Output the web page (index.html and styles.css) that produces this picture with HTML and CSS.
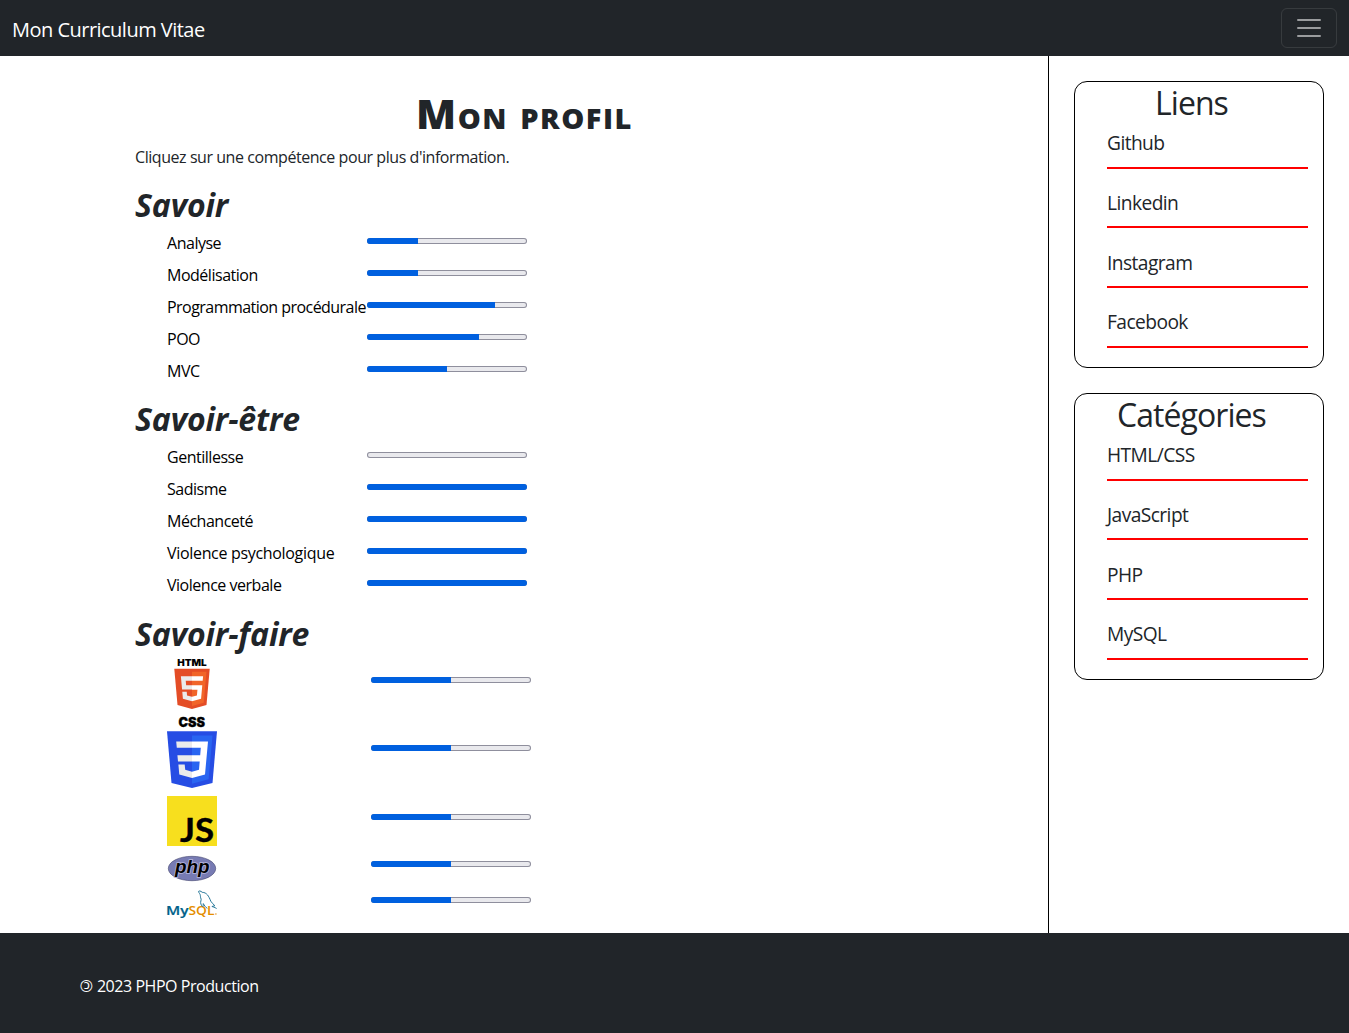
FILE: index.html
```html
<!DOCTYPE html>
<html lang="fr">
<head>
<meta charset="utf-8">
<title>Mon Curriculum Vitae</title>
<link rel="stylesheet" href="styles.css">
</head>
<body>
<nav class="navbar">
  <a class="brand">Mon Curriculum Vitae</a>
  <button class="toggler" aria-label="Menu"><svg width="30" height="30" viewBox="0 0 30 30"><path d="M4 7h22M4 15h22M4 23h22" stroke="#fff" stroke-opacity=".55" stroke-width="2" stroke-linecap="round" stroke-miterlimit="10"/></svg></button>
</nav>
<div class="page">
  <main class="profile">
    <h1>Mon profil</h1>
    <p class="intro">Cliquez sur une compétence pour plus d'information.</p>
    <h2>Savoir</h2>
    <ul class="skills">
      <li><span>Analyse</span><div class="bar"><i style="width:32%"></i></div></li>
      <li><span>Modélisation</span><div class="bar"><i style="width:32%"></i></div></li>
      <li><span class="tight">Programmation procédurale</span><div class="bar"><i style="width:80%"></i></div></li>
      <li><span>POO</span><div class="bar"><i style="width:70%"></i></div></li>
      <li><span>MVC</span><div class="bar"><i style="width:50%"></i></div></li>
    </ul>
    <h2>Savoir-être</h2>
    <ul class="skills">
      <li><span>Gentillesse</span><div class="bar"></div></li>
      <li><span>Sadisme</span><div class="bar"><i style="width:100%"></i></div></li>
      <li><span>Méchanceté</span><div class="bar"><i style="width:100%"></i></div></li>
      <li><span class="loose">Violence psychologique</span><div class="bar"><i style="width:100%"></i></div></li>
      <li><span>Violence verbale</span><div class="bar"><i style="width:100%"></i></div></li>
    </ul>
    <h2 class="last">Savoir-faire</h2>
    <ul class="tools">
      <li class="html">
        <svg width="50" height="50" viewBox="0 0 512 512">
          <text x="104" y="69" font-family="Inter" font-weight="900" font-size="95" textLength="302" lengthAdjust="spacingAndGlyphs">HTML</text>
          <path fill="#e44d26" d="M107.6 471l-33-370.4h362.8l-33 370.2L255.7 512"/><path fill="#f16529" d="M256 480.5V131h148.3L376 447"/>
          <path fill="#ebebeb" d="M142 176.3h114v45.4h-64.2l4.2 46.5h60v45.3H154.4M156.4 336.3H202l3.2 36.3 50.8 13.6v47.4l-93.2-26"/>
          <path fill="#fff" d="M369.6 176.3H255.8v45.4h109.6M361.3 268.2H255.8v45.4h56l-5.3 59-50.7 13.6v47.2l93-25.8"/>
        </svg>
        <div class="bar"><i style="width:50%"></i></div></li>
      <li class="css">
        <svg width="50" height="71" viewBox="0 0 50 71">
          <text x="11.4" y="9.8" font-family="Inter" font-weight="900" font-size="13" stroke="#000" stroke-width=".3" textLength="26.5" lengthAdjust="spacingAndGlyphs">CSS</text>
          <path fill="#264de4" d="M0 14.2h50L45.5 66 25 71 4.5 66z"/><path fill="#2965f1" d="M25 18.4h20.5L41.6 62.2 25 66.8z"/>
          <path fill="#ebebeb" d="M9.2 24.5H25v6.3H9.8zM10.4 38.2H25v6.2H11zM11.4 47.5h6.3l.5 5.2 6.8 2V61l-12.7-3.6z"/>
          <path fill="#fff" d="M25 24.5h16l-3 33L25 61v-6.3l7-2 .7-8.3H25v-6.2h8.2l.6-7.4H25z"/>
        </svg>
        <div class="bar"><i style="width:50%"></i></div></li>
      <li class="js">
        <svg width="50" height="50" viewBox="0 0 50 50"><path fill="#f7df1e" d="M0 0h50v50H0z"/><text x="13" y="45.7" font-family="Lato" font-weight="700" font-size="31.5" stroke="#000" stroke-width=".4" textLength="34" lengthAdjust="spacingAndGlyphs">JS</text></svg>
        <div class="bar"><i style="width:50%"></i></div></li>
      <li class="php">
        <svg width="50" height="27" viewBox="0 0 50 27"><ellipse cx="25" cy="13.5" rx="23.7" ry="12.2" fill="#777bb3" stroke="#45476e" stroke-width=".6"/><text x="8" y="17.7" font-family="Liberation Sans" font-weight="700" font-style="italic" font-size="18" stroke="#b7b9df" stroke-width="1.6" paint-order="stroke" textLength="34.5" lengthAdjust="spacingAndGlyphs">php</text></svg>
        <div class="bar"><i style="width:50%"></i></div></li>
      <li class="mysql">
        <svg width="50" height="27" viewBox="0 0 50 27"><text y="25" font-family="Open Sans" font-weight="600" font-size="12.5"><tspan x="-1" fill="#00618a" stroke="#00618a" stroke-width=".2" textLength="22.5" lengthAdjust="spacingAndGlyphs">My</tspan><tspan x="21.5" fill="#e48e00" textLength="26" lengthAdjust="spacingAndGlyphs">SQL</tspan></text><circle cx="48.9" cy="24" r=".7" fill="#e48e00"/>
        <path d="M49.6 18.5c-2-1.2-3.4-1.7-4.7-2l3-.8c-1.5-1.4-3-2.6-4.1-4.5C41.7 6 39.8 2.5 35.2 2.3 33.7.8 31.8.7 31.6 1.3c-.3.8 1 2 1.5 3.2.6 1.7.1 2.8 1 4.5.4.8-1 2.8-.2 5 .5 1.4 1.5 2.8 2 2.6.5-.3.2-2 .4-3 1.1 2 2.3 3.7 4 4.7" fill="none" stroke="#27789a" stroke-width="1"/></svg>
        <div class="bar"><i style="width:50%"></i></div></li>
    </ul>
  </main>
  <aside class="sidebar">
    <section class="card">
      <h3>Liens</h3>
      <ul><li>Github</li><li>Linkedin</li><li>Instagram</li><li>Facebook</li></ul>
    </section>
    <section class="card">
      <h3>Catégories</h3>
      <ul><li>HTML/CSS</li><li>JavaScript</li><li>PHP</li><li>MySQL</li></ul>
    </section>
  </aside>
</div>
<footer class="footer"><span class="copyleft">©</span><span>2023 PHPO Production</span></footer>
</body>
</html>
```
FILE: styles.css
```css
* { box-sizing: border-box; }
body { margin: 0; font: 400 16px/24px "Segoe UI", "Open Sans", "Noto Sans", sans-serif; color: #212529; background: #fff; }
ul { list-style: none; margin: 0; padding: 0; }
h1, h2, h3, p { margin: 0; }
.navbar { height: 56px; padding: 0 12px; background: #212529; display: flex; align-items: center; justify-content: space-between; }
.brand { color: #fff; font-size: 20px; line-height: 30px; padding-top: 3px; letter-spacing: -.52px; }
.toggler { width: 56px; height: 40px; padding: 0; border: 1px solid rgba(255,255,255,.1); border-radius: 6px; background: none; display: flex; align-items: center; justify-content: center; }
.page { display: flex; height: 877px; }
.profile { width: 1049px; border-right: 1px solid #000; padding: 33px 135px 0; }
h1 { font-size: 41.5px; line-height: 48px; font-weight: 800; font-variant: small-caps; text-align: center; margin-bottom: 8px; letter-spacing: 1.5px; padding-left: 1px; }
.intro { margin-bottom: 17px; letter-spacing: -.44px; }
h2 { font-size: 32px; line-height: 38px; font-weight: 700; font-style: italic; margin-bottom: 7px; letter-spacing: -.15px; }
.skills { padding-left: 32px; margin-bottom: 9px; color: #000; }
.skills li { display: flex; height: 32px; white-space: nowrap; letter-spacing: -.48px; }
.skills span { width: 200px; }
.skills .tight { letter-spacing: -.54px; }
.skills .loose { letter-spacing: -.32px; }
.skills .bar { margin-top: 7px; }
.bar { width: 160px; height: 6px; flex: none; border-radius: 3px; background: #e9e9ed; box-shadow: inset 0 0 0 1px #8f8f9d; display: flex; overflow: hidden; }
.bar i { background: #0060df; flex: none; }
.tools { padding-left: 32px; }
.tools li { display: flex; justify-content: space-between; width: 364px; }
.tools svg { flex: none; display: block; overflow: visible; }
h2.last { padding-top: 1px; margin-bottom: 6px; }
.html { height: 58px; } .html .bar { margin-top: 18px; }
.css { height: 79px; } .css .bar { margin-top: 28px; }
.js { height: 59px; } .js .bar { margin-top: 18px; }
.php { height: 35px; } .php .bar { margin-top: 6px; }
.mysql .bar { margin-top: 7px; }
.sidebar { width: 300px; padding: 25px; display: flex; flex-direction: column; gap: 25px; }
.card { height: 287px; border: 1px solid #000; border-radius: 13px; padding-right: 15px; }
h3 { font-size: 32px; line-height: 38.4px; margin: 2px 0 6px; font-weight: 400; text-align: center; letter-spacing: -.95px; }
.card ul { padding-left: 32px; }
.card li { height: 40.4px; margin-bottom: 19.2px; border-bottom: 2px solid #f00; font-size: 19.2px; line-height: 30.4px; letter-spacing: -.57px; }
.footer { height: 100px; padding: 6px 80px 0; background: #212529; color: #fff; display: flex; align-items: center; gap: 4px; letter-spacing: -.45px; }
.copyleft { display: inline-block; transform: scaleX(-1); }
```
